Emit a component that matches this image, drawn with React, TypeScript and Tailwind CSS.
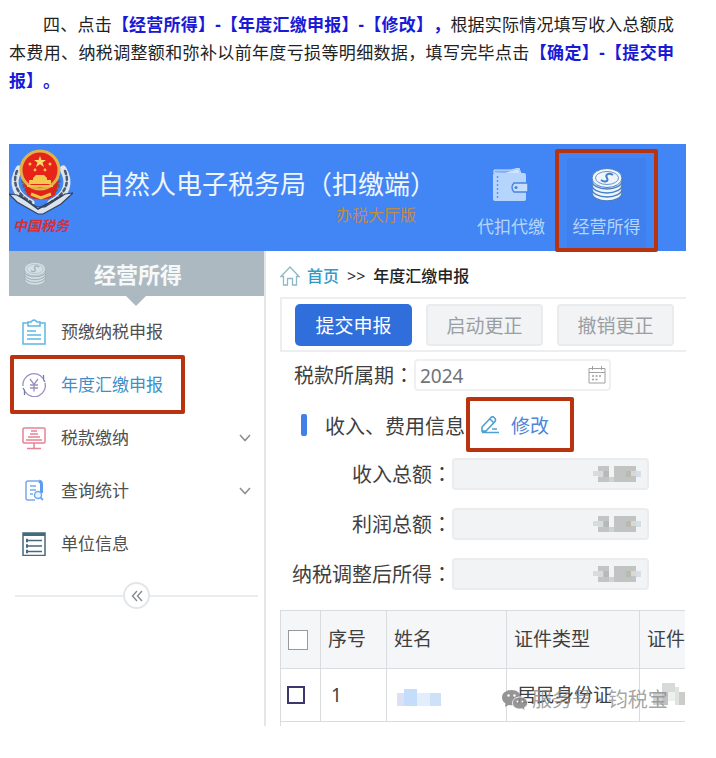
import { ReactNode } from "react";

const cjk = "font-['Noto_Sans','Noto_Sans_CJK_SC',sans-serif]";

function Key({ children }: { children: ReactNode }) {
  return <strong className="font-bold text-[#1a1ad6]">{children}</strong>;
}

function Colon() {
  return <span className="font-['Noto_Sans_CJK_TC',sans-serif]">：</span>;
}

function Emblem() {
  return (
    <svg viewBox="0 0 64 66" className="h-[66px] w-[64px]" aria-hidden="true">
      <g fill="none" strokeLinecap="round">
        <path d="M10 20C2 34 6 46 22 54M54 20C62 34 58 46 42 54" stroke="#dfe5ec" strokeWidth="7" />
        <path d="M8 22C3 34 8 45 22 53M56 22C61 34 56 45 42 53" stroke="#4c5a6e" strokeWidth="2.500" strokeDasharray="3 3" />
        <path d="M14 26C12 36 16 44 26 50M50 26C52 36 48 44 38 50" stroke="#57636f" strokeWidth="2" strokeDasharray="2 3" />
      </g>
      <path d="M0 45L8 46L28 58L36 58L56 45L64 44L52 55L34 65H29L8 53Z" fill="#dbe3ec" stroke="#34415a" strokeWidth="1.2" />
      <path d="M10 46L29 60L54 46" fill="none" stroke="#34415a" strokeWidth="1.500" />
      <path d="M14 32L18 46C26 52 38 52 46 46L50 32Z" fill="#df2318" />
      <path d="M22 45L32 49L42 45" stroke="#f1c34a" strokeWidth="3" fill="none" />
      <circle cx="31" cy="21" r="19" fill="#e6241a" stroke="#dfb34a" strokeWidth="3" />
      <path d="M31 7L32.500 11H37L33.500 13.500L35 18L31 15.300L27 18L28.500 13.500L25 11H29.500Z" fill="#f8dc6b" />
      <g fill="#f6c84f">
        <circle cx="21" cy="15" r="1.500" />
        <circle cx="41" cy="15" r="1.500" />
        <circle cx="26" cy="21" r="1.400" />
        <circle cx="36" cy="21" r="1.400" />
        <path d="M24 29L27 26H35L38 29V31H42V35H20V31H24Z" />
      </g>
      <path d="M18 37H44" stroke="#f1c34a" strokeWidth="2" />
    </svg>
  );
}

function Wallet() {
  return (
    <svg viewBox="0 0 36 34" className="h-[34px] w-9" aria-hidden="true">
      <path d="M1 5V2H18L26 0L28 6Z" fill="#7fb0f6" stroke="#cfe4ff" />
      <path d="M12 5L25 1L27 5Z" fill="#cfe4ff" />
      <rect x="0" y="5" width="33" height="28" rx="2" fill="#b5d5fc" />
      <path d="M4.500 8V31" stroke="#5b93ee" strokeWidth="1.500" strokeDasharray="2 2" />
      <path d="M21 15H35V24H21Q17 19.500 21 15Z" fill="#c5defd" stroke="#4a83df" strokeWidth="1.500" />
      <circle cx="23" cy="19.500" r="1.600" fill="#4a83df" />
    </svg>
  );
}

function Coins({ className, body, line }: { className: string; body: string; line: string }) {
  return (
    <svg viewBox="0 0 32 34" className={className} aria-hidden="true">
      {[25, 21, 17, 13].map((y) => (
        <ellipse key={y} cx="16" cy={y} rx="15" ry="8" fill={body} stroke={line} strokeWidth="1.500" />
      ))}
      <ellipse cx="16" cy="10" rx="15" ry="9.500" fill={body} stroke={line} strokeWidth="1" />
      <ellipse cx="16" cy="10" rx="11.500" ry="6.500" fill="none" stroke={line} strokeWidth=".8" />
      <path d="M22 7C17 4 14 7 16 10C18 13 14 15 10 12" fill="none" stroke={line} strokeWidth="2" />
    </svg>
  );
}

function Clipboard() {
  return (
    <svg viewBox="0 0 24 26" className="h-[26px] w-6" fill="none" stroke="#5cb7e4" strokeWidth="1.500" aria-hidden="true">
      <path d="M6 4H1V25H23V4H18" />
      <path d="M6 7V3H9Q12 -1 15 3H18V7Z" />
      <path d="M5 12H14M5 16H19M5 20H19" />
    </svg>
  );
}

function YenCycle() {
  return (
    <svg viewBox="0 0 24 24" className="size-6" fill="none" stroke="#9b8fc0" strokeWidth="1.300" aria-hidden="true">
      <path d="M1 13A11 11 0 0 1 21 5.500M23 10A11 11 0 0 1 3 18.500" />
      <path d="M21.500 2V6.500L23 9M2.500 22V17.500L1 15" stroke="#6f7aa8" />
      <path d="M8 6L12 11.500L16 6M12 11.500V18.500M8 12H16M8 15H16" />
    </svg>
  );
}

function Monitor() {
  return (
    <svg viewBox="0 0 24 24" className="size-6" fill="none" stroke="#e58494" strokeWidth="1.500" aria-hidden="true">
      <rect x="1" y="2" width="22" height="15" rx="1" />
      <path d="M9 5H15M8 8H16M6 11H18M4 14H20M12 17V22M5 22.500H19" />
    </svg>
  );
}

function DocSearch() {
  return (
    <svg viewBox="0 0 24 24" className="size-6" fill="none" stroke="#74a9ee" strokeWidth="1.500" aria-hidden="true">
      <path d="M17 2H6Q4 2 4 4V19Q4 21 6 21H13" />
      <path d="M17 2Q19.500 3 19.500 5V14" strokeWidth="3" stroke="#5d9bef" />
      <path d="M8 7H14M8 11H14M8 15H11" />
      <circle cx="16" cy="16" r="3.500" fill="#eaf3ff" />
      <path d="M18.500 18.500L21 21" strokeWidth="2" />
    </svg>
  );
}

function ListBox() {
  return (
    <svg viewBox="0 0 24 24" className="size-6" fill="none" stroke="#456a7b" strokeWidth="1.500" aria-hidden="true">
      <rect x="1" y="1" width="22" height="22.500" />
      <path d="M1 2.500H23" strokeWidth="3" />
      <path d="M4 8.500H20M4 14H20M4 19.500H20" />
      <path d="M4 8.500H6M4 14H6M4 19.500H6" strokeWidth="3.500" />
    </svg>
  );
}

function Chevron() {
  return (
    <svg viewBox="0 0 12 8" className="ml-auto h-2 w-3" fill="none" stroke="#8b9094" strokeWidth="1.600" aria-hidden="true">
      <path d="M1 1L6 6.500L11 1" />
    </svg>
  );
}

function MosaicAmount() {
  return (
    <svg viewBox="0 0 48 16" className="pointer-events-none absolute right-2 top-2 h-4 w-12" aria-hidden="true">
      <rect x="0" y="5" width="5" height="5" fill="#d9dcdf" />
      <rect x="5" y="0" width="11" height="16" fill="#c3c5c5" />
      <rect x="5" y="5" width="5" height="6" fill="#d6dbe0" />
      <rect x="11" y="5" width="5" height="6" fill="#b7b9b9" />
      <rect x="16" y="11" width="5" height="5" fill="#d0d3d4" />
      <rect x="21" y="0" width="22" height="16" fill="#c2c4c3" />
      <rect x="33" y="5" width="5" height="6" fill="#b8bab4" />
      <rect x="38" y="5" width="5" height="5" fill="#dbd9cf" />
      <rect x="43" y="5" width="5" height="6" fill="#d5dfe9" />
    </svg>
  );
}

const menu = [
  { label: "预缴纳税申报", icon: <Clipboard /> },
  { label: "年度汇缴申报", icon: <YenCycle />, active: true },
  { label: "税款缴纳", icon: <Monitor />, more: true },
  { label: "查询统计", icon: <DocSearch />, more: true },
  { label: "单位信息", icon: <ListBox /> },
];

function Sidebar() {
  return (
    <aside className="w-[257px] shrink-0 border-r-2 border-[#e4e6e8]">
      <div className="relative flex h-[45px] items-center bg-[#adb9c0] pl-[14px]">
        <Coins className="h-6 w-6" body="#d5dfe4" line="#a3b3bc" />
        <h2 className="ml-[47px] text-[22px] font-bold leading-none text-[#f6f9fa]">经营所得</h2>
        <svg viewBox="0 0 20 10" className="absolute left-[117px] top-full h-[10px] w-5" aria-hidden="true">
          <path d="M0 0H20L10 10Z" fill="#adb9c0" />
        </svg>
      </div>
      <nav className="pt-[9px]">
        {menu.map((item) => (
          <div key={item.label} className="relative">
            <button
              type="button"
              className={
                item.active
                  ? "flex h-[53px] w-full items-center gap-[15px] pl-[13px] pr-[13px] text-[17px] text-[#3d8fc9]"
                  : "flex h-[53px] w-full items-center gap-[15px] pl-[13px] pr-[13px] text-[17px] text-[#505050]"
              }
            >
              {item.icon}
              <span>{item.label}</span>
              {item.more && <Chevron />}
            </button>
            {item.active && (
              <span className="pointer-events-none absolute -inset-y-[3px] left-px w-[175px] rounded-xs border-4 border-[#b8330f]" />
            )}
          </div>
        ))}
      </nav>
      <div className="mt-3 flex items-center pl-[6px] pr-[6px]">
        <span className="h-0.5 flex-1 bg-[#e9ecee]" />
        <button
          type="button"
          aria-label="收起菜单"
          className="flex size-[27px] items-center justify-center rounded-full border-2 border-[#e2e6e9] bg-white"
        >
          <svg viewBox="0 0 12 12" className="size-3" fill="none" stroke="#858b90" strokeWidth="1.400" aria-hidden="true">
            <path d="M6 1L1.500 6L6 11M11 1L6.500 6L11 11" />
          </svg>
        </button>
        <span className="h-0.5 flex-1 bg-[#e9ecee]" />
      </div>
    </aside>
  );
}

function Amount({ id, label }: { id: string; label: string }) {
  return (
    <div className="flex h-8 items-center">
      <label htmlFor={id} className="w-[172px] shrink-0 whitespace-nowrap text-right text-[20px] leading-8 text-[#3f3f3f]">
        {label}
        <Colon />
      </label>
      <div className="relative h-8 w-[197px]">
        <input id={id} readOnly className="h-8 w-full rounded-[4px] border-2 border-[#eaecee] bg-[#f1f3f5]" />
        <MosaicAmount />
      </div>
    </div>
  );
}

function Records() {
  const th = "border border-[#d9dcdf] pl-[7px] text-left font-normal";
  const td = "border border-[#d9dcdf]";
  return (
    <div className="relative mt-5 border-l border-[#d9dcdf] pb-1">
      <table className="-ml-px w-full table-fixed border-collapse text-[19px] text-[#3f3f3f]">
        <colgroup>
          <col className="w-10" />
          <col className="w-[66px]" />
          <col className="w-[120px]" />
          <col className="w-[133px]" />
          <col />
        </colgroup>
        <thead>
          <tr className="h-[58px] bg-[#f4f6f8]">
            <th className={th}>
              <input type="checkbox" aria-label="全选" className="block size-5 appearance-none border border-[#999] bg-white" />
            </th>
            <th className={th}>序号</th>
            <th className={th}>姓名</th>
            <th className={th}>证件类型</th>
            <th className="border border-r-0 border-[#d9dcdf] pl-[7px] text-left font-normal whitespace-nowrap">证件</th>
          </tr>
        </thead>
        <tbody>
          <tr className="h-[53px]">
            <td className={td}>
              <input type="checkbox" aria-label="选择第1行" className="ml-[6px] block size-[18px] appearance-none border-2 border-[#3b3768] bg-white" />
            </td>
            <td className={td + " pl-[10px]"}>1</td>
            <td className={td + " pl-[10px]"}>
              <svg viewBox="0 0 44 17" className="mt-1 block h-[17px] w-11" aria-hidden="true">
                <rect y="4" width="7" height="13" fill="#dde0f5" />
                <rect x="7" width="13" height="17" fill="#c4ddfa" />
                <rect x="20" y="4" width="13" height="13" fill="#e2eefc" />
                <rect x="33" y="4" width="11" height="13" fill="#cfe1f8" />
              </svg>
            </td>
            <td className={td + " whitespace-nowrap pl-[10px]"}>居民身份证</td>
            <td className="border border-r-0 border-[#d9dcdf]">
              <svg viewBox="0 0 32 24" className="ml-auto block h-6 w-8" aria-hidden="true">
                <rect x="0" y="9" width="9" height="13" fill="#cfd2d2" />
                <rect x="9" y="0" width="13" height="9" fill="#d6dad8" />
                <rect x="9" y="9" width="6" height="13" fill="#bfc2c1" />
                <rect x="15" y="9" width="11" height="9" fill="#eef0ed" />
                <rect x="22" y="4" width="4" height="18" fill="#dfe3df" />
                <rect x="26" y="9" width="6" height="13" fill="#cbcdcc" />
              </svg>
            </td>
          </tr>
        </tbody>
      </table>
      <div className="pointer-events-none absolute bottom-3 left-[221px] flex items-center gap-1 whitespace-nowrap text-[20px] leading-7 text-[#8e8e8e]/80">
        <svg viewBox="0 0 26 22" className="h-[22px] w-[26px] opacity-90" fill="#8a8a8a" aria-hidden="true">
          <path d="M9.500 1C4 1 0 4.500 0 8.500C0 11 1.300 13 3.500 14.500L3 18L6.500 16C12 17.500 19 14 19 8.500C19 4.500 15 1 9.500 1Z" />
          <path d="M18 8C13.500 8 10.500 10.500 10.500 14S13.500 20 18 20L20 19.700L23 21.500L22.500 18.500C24.500 17.500 25.500 16 25.500 14C25.500 10.500 22.500 8 18 8Z" stroke="#fff" strokeWidth=".8" />
          <g fill="#fff">
            <circle cx="6.500" cy="6.500" r="1.200" />
            <circle cx="12.500" cy="6.500" r="1.200" />
            <circle cx="15.500" cy="12.500" r="1" />
            <circle cx="20.500" cy="12.500" r="1" />
          </g>
        </svg>
        <span>服务号 · 钧税宝</span>
      </div>
    </div>
  );
}

function Main() {
  const disabled = "h-[42px] w-[117px] shrink-0 rounded-[4px] border-2 border-[#e9ebed] bg-[#f1f3f5] pt-[3px] text-[19px] leading-none text-[#9b9fa3]";
  return (
    <main className="min-w-0 flex-1 overflow-hidden pl-[14px]">
      <div className="flex h-[46px] items-center pt-1 text-[16px] leading-none">
        <svg viewBox="0 0 20 20" className="size-5" fill="none" stroke="#8db9c8" strokeWidth="1.300" aria-hidden="true">
          <path d="M1 10.500L10 1L19 10.500H16.500V19H12.500V12.500H7.500V19H3.500V10.500Z" />
        </svg>
        <a href="#home" className="ml-[7px] font-medium text-[#3299c8]">首页</a>
        <span className="mx-2 text-[#333]">&gt;&gt;</span>
        <span className="font-medium text-[#222]">年度汇缴申报</span>
      </div>
      <div className="flex h-[55px] items-center gap-[14px] border-2 border-r-0 border-[#eceef0] pl-[13px]">
        <button type="button" className="h-[42px] w-[117px] shrink-0 rounded-[5px] bg-[#2f6edb] pt-[3px] text-[19px] leading-none text-white">
          提交申报
        </button>
        <button type="button" disabled className={disabled}>启动更正</button>
        <button type="button" disabled className={disabled}>撤销更正</button>
      </div>
      <div className="mt-[7px] flex h-8 items-center pl-[14px]">
        <label htmlFor="period" className="whitespace-nowrap text-[20px] leading-8 text-[#3f3f3f]">
          税款所属期
          <Colon />
        </label>
        <div className="relative h-8 w-[197px]">
          <input
            id="period"
            defaultValue="2024"
            className="h-8 w-full rounded-[4px] border-2 border-[#eef0f1] bg-white pl-1 pt-[2px] text-[19px] text-[#707478]"
          />
          <svg viewBox="0 0 18 18" className="absolute right-[5px] top-[7px] size-[18px]" fill="none" stroke="#a0a0a0" aria-hidden="true">
            <path d="M1 2.500H17V17H1ZM1 6.500H17M4.500 0V4M13.500 0V4" />
            <path d="M4 10H14M4 13.500H11" strokeWidth="1.500" strokeDasharray="2 1.500" />
          </svg>
        </div>
      </div>
      <div className="mt-[6px] flex h-[55px] items-center pl-[21px]">
        <span className="h-[22px] w-[6px] rounded-[2px] bg-[#4080e8]" />
        <h3 className="ml-[18px] mt-1 whitespace-nowrap text-[20px] leading-none text-[#3f3f3f]">收入、费用信息</h3>
        <button
          type="button"
          className="ml-px flex h-[55px] w-[108px] items-center gap-[11px] rounded-xs border-4 border-[#b8330f] pl-[10px] text-[19px] leading-none text-[#4f83dc]"
        >
          <svg viewBox="0 0 20 18" className="h-[18px] w-5" fill="none" stroke="#4f9fd2" strokeWidth="1.600" aria-hidden="true">
            <path d="M2 15V11L11 1.500Q12.500 0 14 1.500L15 2.500Q16 4 15 5.500L6 15ZM10 3L13.500 6.500M2 16.500H19M12 13H17" />
          </svg>
          <span className="pt-1">修改</span>
        </button>
      </div>
      <div className="mt-[6px] flex flex-col gap-[18px]">
        <Amount id="income" label="收入总额" />
        <Amount id="profit" label="利润总额" />
        <Amount id="adjusted" label="纳税调整后所得" />
      </div>
      <Records />
    </main>
  );
}

function TopBar() {
  return (
    <header className="flex h-[107px] items-start bg-[#4285f4] pr-7">
      <div className="flex w-16 flex-col items-center pt-[5px]">
        <Emblem />
        <span className="mt-[3px] whitespace-nowrap text-[14px] font-bold italic leading-4 text-[#d5303a]">中国税务</span>
      </div>
      <div className="ml-[25px] flex flex-col pt-6">
        <h1 className="whitespace-nowrap text-[26px] leading-8 text-[#eef6ff]">自然人电子税务局（扣缴端）</h1>
        <span className="-mt-px ml-[238px] whitespace-nowrap text-[16px] leading-8 text-[#c18c43]">办税大厅版</span>
      </div>
      <nav className="ml-auto flex pt-[5px]">
        <button type="button" className="flex w-[88px] flex-col items-center pt-[19px] text-[17px] leading-6 text-[#b5d5fc]">
          <Wallet />
          <span className="mt-[13px]">代扣代缴</span>
        </button>
        <button
          type="button"
          className="relative z-10 flex h-[103px] w-[103px] rounded-xs border-4 border-[#b8330f] px-2 pt-[5px] text-[17px] leading-6 text-[#b5d5fc]"
        >
          <span className="flex h-[90px] flex-1 flex-col items-center bg-[#3f80ee] pt-[10px]">
            <Coins className="h-[34px] w-8" body="#eef5fb" line="#4a7fc6" />
            <span className="mt-[13px]">经营所得</span>
          </span>
        </button>
      </nav>
    </header>
  );
}

export default function App() {
  return (
    <article className={cjk + " min-h-screen bg-white pb-8 pl-[9px] pr-[30px] pt-[11px]"}>
      <p className="mr-3 text-justify indent-[34px] text-[17px] leading-7 text-[#222] [text-spacing-trim:space-all]">
        四、点击<Key>【经营所得】-【年度汇缴申报】-【修改】，</Key>
        根据实际情况填写收入总额成本费用、纳税调整额和弥补以前年度亏损等明细数据，填写完毕点击<Key>【确定】-【提交申报】。</Key>
      </p>
      <section className="mt-[49px] bg-white">
        <TopBar />
        <div className="flex">
          <Sidebar />
          <Main />
        </div>
      </section>
    </article>
  );
}
